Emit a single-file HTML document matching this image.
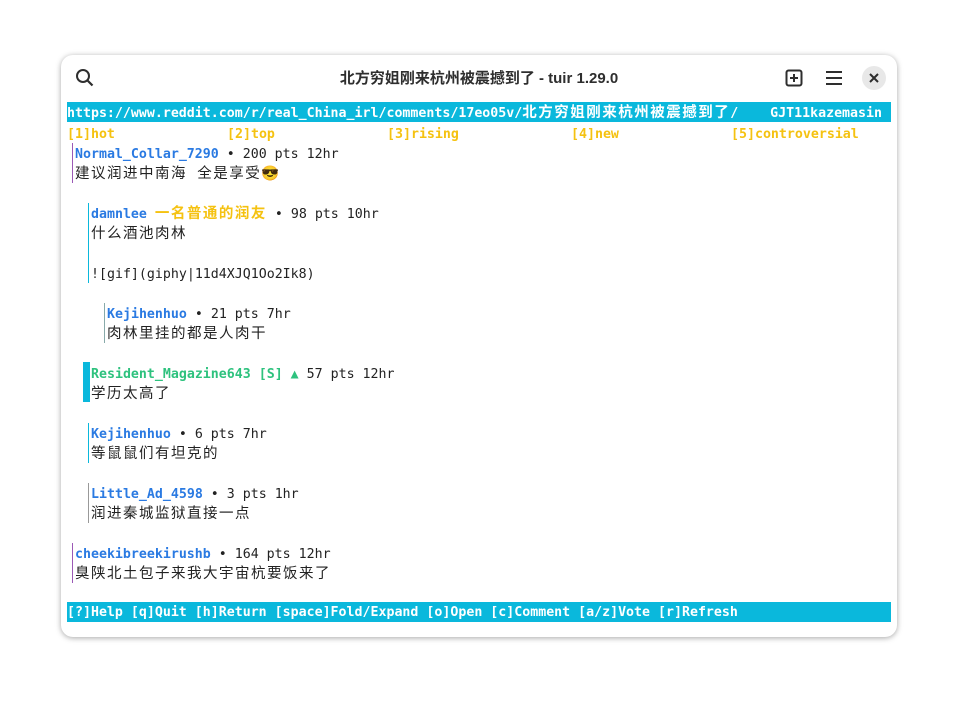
<!DOCTYPE html>
<html><head><meta charset="utf-8"><style>
body{margin:0;width:958px;height:704px;background:#fff;position:relative;overflow:hidden;font-family:"DejaVu Sans Mono","Noto Sans CJK SC",monospace;}
.win{position:absolute;left:61px;top:55px;width:836px;height:582px;background:#fff;border-radius:12px;box-shadow:0 1px 6px rgba(0,0,0,.35);overflow:hidden}
.title{position:absolute;left:0;right:0;top:0;height:47px;text-align:center;font:bold 15px "Liberation Sans","Noto Sans CJK SC",sans-serif;line-height:47px;color:#2e2e2e}
.r{position:absolute;left:67px;height:20px;line-height:23px;font-size:13.28px;white-space:pre;color:#222}
.c{letter-spacing:1.5px;font-size:14.5px}
.bar{background:#0ab8dc;color:#fff;font-weight:bold;width:824px;line-height:22px}
.y{color:#f5c211;font-weight:bold}
.u{color:#2a7ae2;font-weight:bold}
.g{color:#2ec27e;font-weight:bold}
.v{position:absolute;width:1px}
</style></head><body>
<div class="win">
<div class="title">北方穷姐刚来杭州被震撼到了 - tuir 1.29.0</div>
<svg style="position:absolute;left:14px;top:13px" width="20" height="20" viewBox="0 0 20 20"><circle cx="8" cy="8" r="6" fill="none" stroke="#2e2e2e" stroke-width="2"/><line x1="12.5" y1="12.5" x2="17.5" y2="17.5" stroke="#2e2e2e" stroke-width="2.2"/></svg>
<svg style="position:absolute;left:724px;top:14px" width="18" height="18" viewBox="0 0 18 18"><rect x="1.5" y="1.5" width="15" height="15" rx="2" fill="none" stroke="#2e2e2e" stroke-width="2"/><path d="M9 5v8M5 9h8" stroke="#2e2e2e" stroke-width="2"/></svg>
<svg style="position:absolute;left:764px;top:15px" width="18" height="16" viewBox="0 0 18 16"><path d="M1 2h16M1 8h16M1 14h16" stroke="#2e2e2e" stroke-width="2"/></svg>
<div style="position:absolute;left:801px;top:11px;width:24px;height:24px;border-radius:12px;background:#e8e8e8"></div>
<svg style="position:absolute;left:808px;top:18px" width="10" height="10" viewBox="0 0 10 10"><path d="M1 1l8 8M9 1l-8 8" stroke="#2e2e2e" stroke-width="2"/></svg>
</div>
<div class="r bar" style="top:102px">https://www.reddit.com/r/real_China_irl/comments/17eo05v/<span class="c">北方穷姐刚来杭州被震撼到了</span>/    GJT11kazemasin</div>
<div class="r y" style="top:123px">[1]hot</div>
<div class="r y" style="top:123px;left:227px">[2]top</div>
<div class="r y" style="top:123px;left:387px">[3]rising</div>
<div class="r y" style="top:123px;left:571px">[4]new</div>
<div class="r y" style="top:123px;left:731px">[5]controversial</div>

<div class="v" style="left:72px;top:143px;height:40px;background:#9b59b6"></div>
<div class="r" style="top:143px;left:75px"><span class="u">Normal_Collar_7290</span> • 200 pts 12hr</div>
<div class="r c" style="top:163px;left:75px">建议润进中南海 全是享受😎</div>

<div class="v" style="left:88px;top:203px;height:80px;background:#0ab8dc"></div>
<div class="r" style="top:203px;left:91px"><span class="u">damnlee</span> <span class="y c">一名普通的润友</span> • 98 pts 10hr</div>
<div class="r c" style="top:223px;left:91px">什么酒池肉林</div>
<div class="r" style="top:263px;left:91px">![gif](giphy|11d4XJQ1Oo2Ik8)</div>

<div class="v" style="left:104px;top:303px;height:40px;background:#8aa"></div>
<div class="r" style="top:303px;left:107px"><span class="u">Kejihenhuo</span> • 21 pts 7hr</div>
<div class="r c" style="top:323px;left:107px">肉林里挂的都是人肉干</div>

<div class="v" style="left:83px;top:362px;height:40px;width:7px;background:#0ab8dc"></div>
<div class="r" style="top:363px;left:91px"><span class="g">Resident_Magazine643 [S] ▲</span> 57 pts 12hr</div>
<div class="r c" style="top:383px;left:91px">学历太高了</div>

<div class="v" style="left:88px;top:423px;height:40px;background:#0ab8dc"></div>
<div class="r" style="top:423px;left:91px"><span class="u">Kejihenhuo</span> • 6 pts 7hr</div>
<div class="r c" style="top:443px;left:91px">等鼠鼠们有坦克的</div>

<div class="v" style="left:88px;top:483px;height:40px;background:#999"></div>
<div class="r" style="top:483px;left:91px"><span class="u">Little_Ad_4598</span> • 3 pts 1hr</div>
<div class="r c" style="top:503px;left:91px">润进秦城监狱直接一点</div>

<div class="v" style="left:72px;top:543px;height:40px;background:#9b59b6"></div>
<div class="r" style="top:543px;left:75px"><span class="u">cheekibreekirushb</span> • 164 pts 12hr</div>
<div class="r c" style="top:563px;left:75px">臭陕北土包子来我大宇宙杭要饭来了</div>

<div class="r bar" style="top:602px">[?]Help [q]Quit [h]Return [space]Fold/Expand [o]Open [c]Comment [a/z]Vote [r]Refresh</div>
</body></html>
